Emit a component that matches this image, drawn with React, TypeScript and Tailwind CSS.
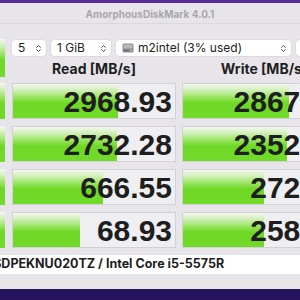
import React from "react";
import { ChevronsUpDown } from "lucide-react";

const rows = [
  { read: "2968.93", readW: 105, write: "2867.66", writeW: 106 },
  { read: "2732.28", readW: 104, write: "2352.40", writeW: 104 },
  { read: "666.55", readW: 90, write: "272.63", writeW: 81 },
  { read: "68.93", readW: 67, write: "258.92", writeW: 81 },
];

const green =
  "bg-[linear-gradient(180deg,#f3f7ef_0%,#d6f1c0_16%,#97e45e_40%,#6fd826_56%,#72db2a_100%)]";

const DiskIcon = () => (
  <svg width="12" height="12" viewBox="0 0 12 12">
    <rect x="0.5" y="1.5" width="11" height="9" rx="1.5" fill="#8d8c90" />
    <rect x="1.5" y="2.5" width="9" height="4" rx="0.8" fill="#b9b8bc" />
    <rect x="2" y="8" width="5" height="1" fill="#5d5c60" />
    <circle cx="9" cy="8.5" r="0.8" fill="#d8d7db" />
  </svg>
);

const Select = ({ w, children }: { w: string; children: React.ReactNode }) => (
  <div
    className={`${w} h-[16px] shrink-0 bg-white rounded-[4px] flex items-center justify-between pl-[6px] pr-[3px] text-[12px] text-[#222] shadow-[0_0_0_0.5px_#d2d0d5]`}
  >
    <div className="flex items-center gap-[4px]">{children}</div>
    <ChevronsUpDown className="w-[9px] h-[9px] text-[#444]" strokeWidth={2.5} />
  </div>
);

const Cell = ({ value, w }: { value: string; w: number }) => (
  <div className="relative w-[164px] h-[36px] shrink-0 bg-[#efeef1] border border-[#d2d1d5] overflow-hidden">
    <div className={`h-full ${green}`} style={{ width: w }} />
    <div className="absolute inset-0 flex items-center justify-end pr-[3px] font-['Liberation_Sans',Arial,sans-serif] text-[30px] font-bold text-[#1e1e1e]">
      {value}
    </div>
  </div>
);

export default function App() {
  return (
    <div className="w-[300px] h-[300px] overflow-hidden bg-[#25135d] font-['Inter',sans-serif]">
      <div className="h-[3px] bg-[#5a2c9a]" />
      <div className="ml-[-60px] w-[420px] h-[286px] bg-[#e7e5e9]">
        {/* title bar */}
        <div className="h-[21px] border-b border-[#dad8dc] flex">
          <div className="ml-[60px] w-[300px] pt-[3px] flex items-center justify-center text-[10px] font-bold text-[#a9a7ab]">
            AmorphousDiskMark 4.0.1
          </div>
        </div>

        <div className="pl-[8px] pt-[15px] flex flex-col gap-[6px]">
          {/* top block */}
          <div className="flex gap-[7px]">
            <div className={`w-[57px] h-[38px] shrink-0 ${green}`} />
            <div className="flex flex-col">
              <div className="mt-[1px] flex gap-[5px]">
                <Select w="w-[34px]">5</Select>
                <Select w="w-[60px]">1 GiB</Select>
                <Select w="w-[175px]">
                  <DiskIcon />
                  <span>m2intel (3% used)</span>
                </Select>
                <Select w="w-[60px]">MB/s</Select>
              </div>
              <div className="h-[21px] pt-[4px] flex gap-[6px] items-center text-[14px] font-bold text-[#1e1e1e]">
                <div className="w-[164px] text-center">Read [MB/s]</div>
                <div className="w-[164px] text-center">Write [MB/s]</div>
              </div>
            </div>
          </div>

          {/* result rows */}
          <div className="flex flex-col gap-[7px]">
            {rows.map((r) => (
              <div key={r.read} className="flex gap-[7px]">
                <div className={`w-[57px] h-[36px] shrink-0 ${green}`} />
                <div className="flex gap-[6px]">
                  <Cell value={r.read} w={r.readW} />
                  <Cell value={r.write} w={r.writeW} />
                </div>
              </div>
            ))}
          </div>

          {/* comment field */}
          <div className="mt-[1px] h-[19px] w-[412px] bg-white flex items-center text-[12.5px] font-bold text-[#1e1e1e] whitespace-nowrap">
            <span className="ml-[-2px]">INTEL SSDPEKNU020TZ / Intel Core i5-5575R</span>
          </div>
        </div>
      </div>
    </div>
  );
}
